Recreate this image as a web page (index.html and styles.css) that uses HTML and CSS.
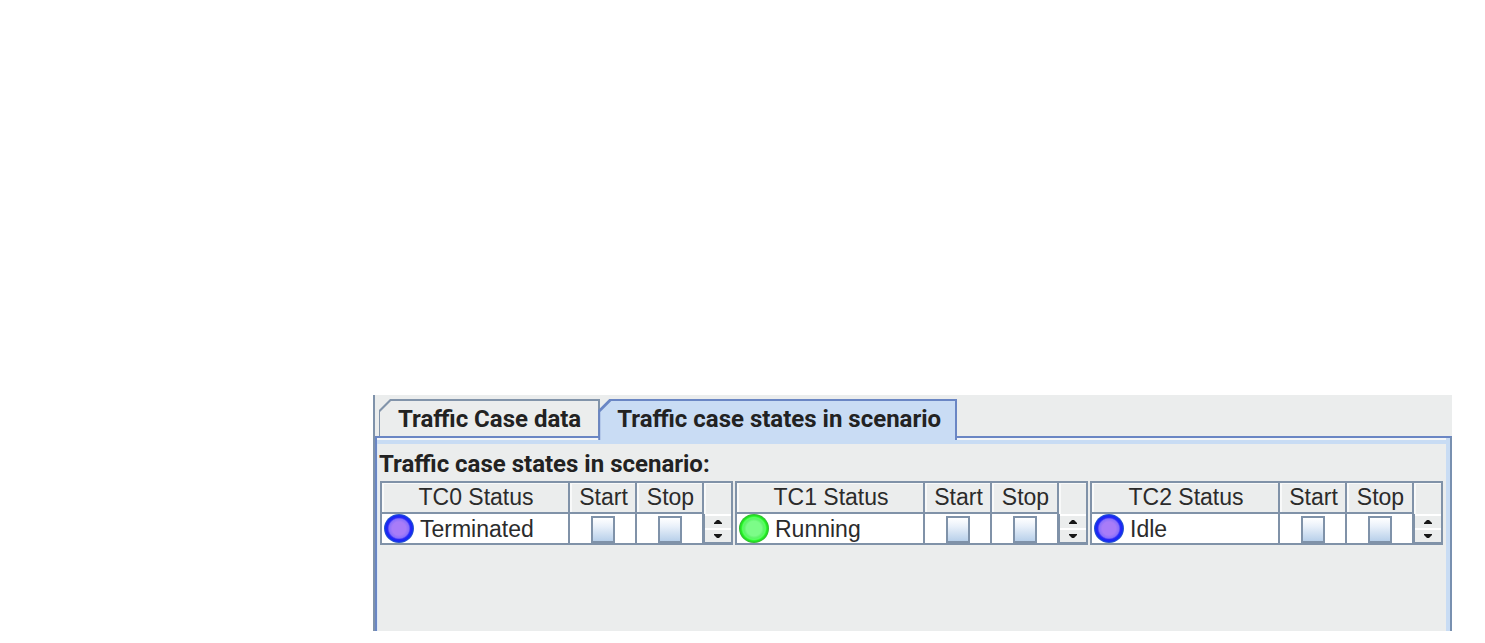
FILE: index.html
```html
<!DOCTYPE html>
<html lang="en">
<head>
<meta charset="utf-8">
<title>Traffic case states</title>
<link rel="stylesheet" href="styles.css">
</head>
<body>
<main class="window">
  <div class="tabs" role="tablist">
    <button class="tab" role="tab" aria-selected="false"><span class="tab-label">Traffic Case data</span></button>
    <button class="tab tab-active" role="tab" aria-selected="true"><span class="tab-label">Traffic case states in scenario</span></button>
  </div>
  <section class="page" role="tabpanel">
    <h1 class="title">Traffic case states in scenario:</h1>
    <div class="cases">
      <table class="case">
        <colgroup><col><col class="col-check"><col class="col-check"><col class="col-spin"></colgroup>
        <thead><tr><th>TC0 Status</th><th>Start</th><th>Stop</th><th class="spin-head"></th></tr></thead>
        <tbody><tr>
          <td><div class="status"><span class="lamp lamp-blue"></span>Terminated</div></td>
          <td><input class="check" type="checkbox" aria-label="Start TC0"></td>
          <td><input class="check" type="checkbox" aria-label="Stop TC0"></td>
          <td class="spin-cell"><div class="spin">
            <button class="spin-button" aria-label="Up"><svg class="arrow" viewBox="0 0 8 4"><path d="M0 4V3L3 0H5L8 3V4Z"/></svg></button>
            <button class="spin-button" aria-label="Down"><svg class="arrow" viewBox="0 0 8 4"><path d="M0 0V1L3 4H5L8 1V0Z"/></svg></button>
          </div></td>
        </tr></tbody>
      </table>
      <table class="case">
        <colgroup><col><col class="col-check"><col class="col-check"><col class="col-spin"></colgroup>
        <thead><tr><th>TC1 Status</th><th>Start</th><th>Stop</th><th class="spin-head"></th></tr></thead>
        <tbody><tr>
          <td><div class="status"><span class="lamp lamp-green"></span>Running</div></td>
          <td><input class="check" type="checkbox" aria-label="Start TC1"></td>
          <td><input class="check" type="checkbox" aria-label="Stop TC1"></td>
          <td class="spin-cell"><div class="spin">
            <button class="spin-button" aria-label="Up"><svg class="arrow" viewBox="0 0 8 4"><path d="M0 4V3L3 0H5L8 3V4Z"/></svg></button>
            <button class="spin-button" aria-label="Down"><svg class="arrow" viewBox="0 0 8 4"><path d="M0 0V1L3 4H5L8 1V0Z"/></svg></button>
          </div></td>
        </tr></tbody>
      </table>
      <table class="case">
        <colgroup><col><col class="col-check"><col class="col-check"><col class="col-spin"></colgroup>
        <thead><tr><th>TC2 Status</th><th>Start</th><th>Stop</th><th class="spin-head"></th></tr></thead>
        <tbody><tr>
          <td><div class="status"><span class="lamp lamp-blue"></span>Idle</div></td>
          <td><input class="check" type="checkbox" aria-label="Start TC2"></td>
          <td><input class="check" type="checkbox" aria-label="Stop TC2"></td>
          <td class="spin-cell"><div class="spin">
            <button class="spin-button" aria-label="Up"><svg class="arrow" viewBox="0 0 8 4"><path d="M0 4V3L3 0H5L8 3V4Z"/></svg></button>
            <button class="spin-button" aria-label="Down"><svg class="arrow" viewBox="0 0 8 4"><path d="M0 0V1L3 4H5L8 1V0Z"/></svg></button>
          </div></td>
        </tr></tbody>
      </table>
    </div>
  </section>
</main>
</body>
</html>
```
FILE: styles.css
```css
* { box-sizing: border-box; }

body {
  margin: 0;
  min-height: 100vh;
  padding: 395px 33px 12px 373px;
  display: flex;
  background: #fff;
  color: #2b2b2b;
  font-family: "Liberation Sans", Arial, sans-serif;
  font-size: 23px;
  line-height: 30px;
}

.window {
  flex: 1;
  min-width: 0;
  display: flex;
  flex-direction: column;
  background: #ebeded;
  border-left: 2px solid #7f92aa;
}

.tabs {
  display: flex;
  align-items: flex-start;
  padding: 4px 0 0 4px;
}

.tab {
  position: relative;
  height: 37px;
  margin: 0;
  padding: 0 19px;
  border: 0;
  background: #8294aa;
  color: #222;
  font: bold 24px/40px Roboto, "Liberation Sans", Arial, sans-serif;
  white-space: nowrap;
  clip-path: polygon(11px 0, 100% 0, 100% 100%, 0 100%, 0 11px);
}

.tab::before {
  content: "";
  position: absolute;
  inset: 2px 2px 0 1px;
  background: #ebeded;
  clip-path: polygon(11px 0, 100% 0, 100% 100%, 0 100%, 0 11px);
}

.tab-label { position: relative; }

.tab-active {
  height: 41px;
  margin-bottom: -4px;
  margin-left: -2px;
  padding: 0 16px 3px 19px;
  background: #6a86c4;
  z-index: 1;
}

.tab-active::before {
  inset: 2px 2px 0 2px;
  background: #c9dcf4;
}

.page {
  flex: 1;
  border-top: 2px solid #6a86c4;
  border-left: 2px solid #6a86c4;
  border-right: 2px solid #7890b0;
  box-shadow: inset -4px 0 #c8dcf4, inset 0 2px #f4f6f8, inset 0 6px #c8dcf4, inset 1px 0 #dce8f6;
  padding: 12px 7px 0 2px;
}

.title {
  margin: 0 0 3px;
  color: #222;
  font: bold 24px/28px Roboto, "Liberation Sans", Arial, sans-serif;
}

.cases {
  display: flex;
  gap: 2px;
  padding-left: 1px;
}

.case {
  flex: 1;
  min-width: 0;
  table-layout: fixed;
  border-collapse: separate;
  border-spacing: 0;
  border: solid #8092a8;
  border-width: 2px 0 0 2px;
}

.col-check { width: 67px; }
.col-spin { width: 29px; }

.case th, .case td {
  height: 31px;
  padding: 0;
  border: solid #8092a8;
  border-width: 0 2px 2px 0;
  overflow: hidden;
  text-align: center;
  vertical-align: middle;
  font-weight: normal;
  white-space: nowrap;
}

.case th {
  line-height: 29px;
  padding-left: 2px;
  background: #ebeded;
  box-shadow: inset 2px 1px #f8f9f9;
}

.case .spin-head { border-bottom: 0; }

.case td { background: #fff; }

.status {
  display: flex;
  align-items: center;
  gap: 6px;
  height: 29px;
  padding-left: 2px;
}

.lamp {
  flex: none;
  width: 30px;
  height: 29px;
  border-radius: 50%;
}

.lamp-blue {
  background: radial-gradient(closest-side, #a87cf8 0 45%, #8a70fa 66%, #2c28f8 76%, #1428f4 88%, #2c60c8 100%);
}

.lamp-green {
  background: radial-gradient(closest-side, #7cfc88 0 50%, #5cf468 66%, #58ff60 76%, #20f020 86%, #34b434 100%);
}

.check {
  appearance: none;
  display: block;
  width: 24px;
  height: 27px;
  margin: 2px auto 0;
  border: 2px solid #7f92a9;
  background: linear-gradient(#fff, #eaf1fa 35%, #b8d0ea);
}

.spin {
  display: flex;
  flex-direction: column;
  height: 29px;
  border-left: 1px solid #8092a8;
  border-bottom: 1px solid #8092a8;
  background: #ebeded;
}

.spin-button {
  flex: 1;
  display: flex;
  align-items: center;
  justify-content: center;
  padding: 0;
  border: 0;
  border-top: 2px solid #fff;
  background: #ebeded;
}

.arrow {
  width: 8px;
  height: 4px;
  fill: #181818;
}
```
